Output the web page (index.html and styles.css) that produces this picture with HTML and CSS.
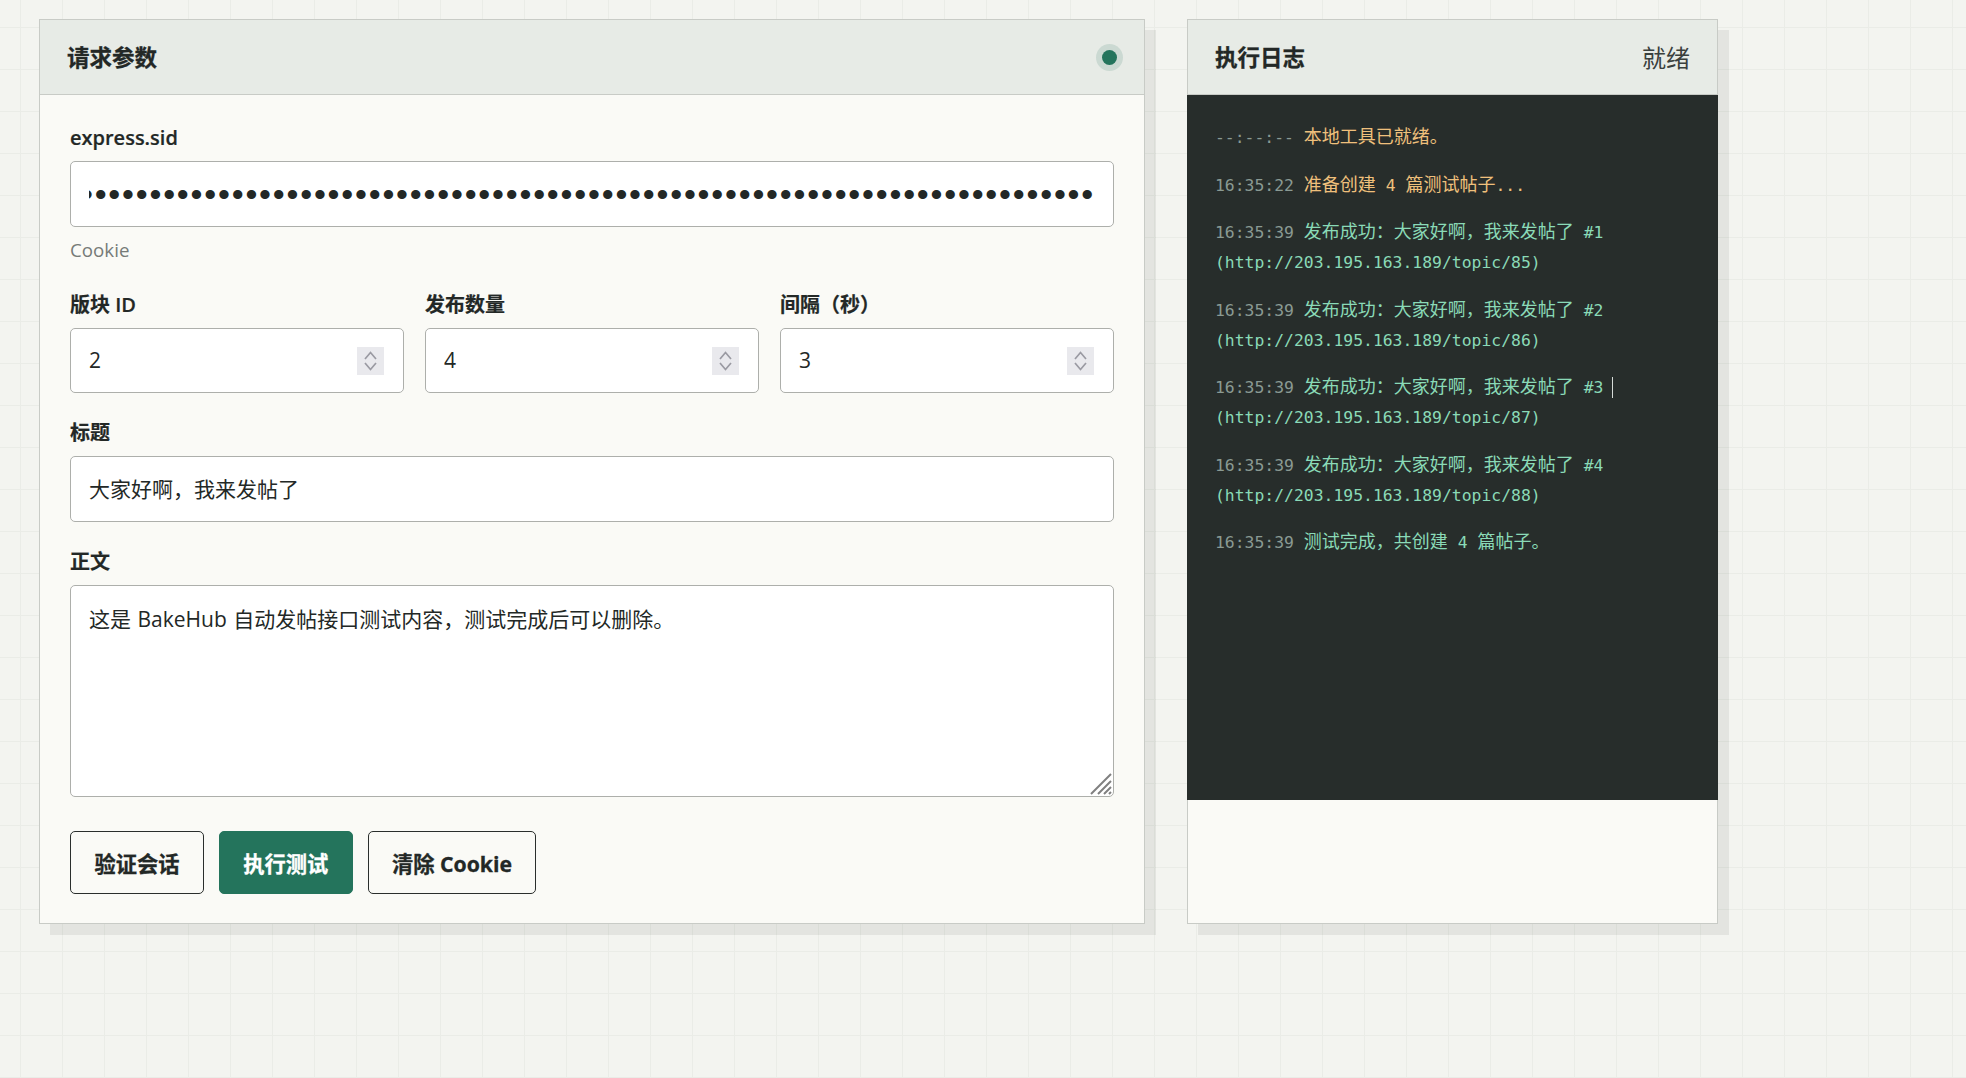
FILE: index.html
```html
<!DOCTYPE html>
<html lang="zh-CN">
<head>
  <meta charset="UTF-8">
  <meta name="viewport" content="width=device-width, initial-scale=1">
  <title>BakeHub 自动发帖测试</title>
  <link rel="stylesheet" href="styles.css">
</head>
<body>

<main class="layout">
  <section class="panel">
    <header class="panel-head">
      <h2>请求参数</h2>
      <span class="status-dot"></span>
    </header>
    <form class="form-body">
      <div class="form-group">
        <label for="sid">express.sid</label>
        <input class="field field-secret" type="password" id="sid" value="aaaaaaaaaaaaaaaaaaaaaaaaaaaaaaaaaaaaaaaaaaaaaaaaaaaaaaaaaaaaaaaaaaaaaaaaaaaaaaaaaaaaaaaaaaaaaaaaaaaaaaaaaaaaaaaaaaaaaaaaaaaa">
        <small class="hint">Cookie</small>
      </div>

      <div class="form-row">
        <div class="form-group">
          <label for="cid">版块 ID</label>
          <div class="number-wrap">
            <input class="field" type="number" id="cid" value="2">
            <svg class="spinner" viewBox="0 0 27 28" aria-hidden="true">
              <rect width="27" height="28"/>
              <path d="M8 12l5.5-6.5L19 12M8 16l5.5 6.5L19 16"/>
            </svg>
          </div>
        </div>
        <div class="form-group">
          <label for="count">发布数量</label>
          <div class="number-wrap">
            <input class="field" type="number" id="count" value="4">
            <svg class="spinner" viewBox="0 0 27 28" aria-hidden="true">
              <rect width="27" height="28"/>
              <path d="M8 12l5.5-6.5L19 12M8 16l5.5 6.5L19 16"/>
            </svg>
          </div>
        </div>
        <div class="form-group">
          <label for="delay">间隔（秒）</label>
          <div class="number-wrap">
            <input class="field" type="number" id="delay" value="3">
            <svg class="spinner" viewBox="0 0 27 28" aria-hidden="true">
              <rect width="27" height="28"/>
              <path d="M8 12l5.5-6.5L19 12M8 16l5.5 6.5L19 16"/>
            </svg>
          </div>
        </div>
      </div>

      <div class="form-group">
        <label for="title">标题</label>
        <input class="field field-title" type="text" id="title" value="大家好啊，我来发帖了">
      </div>

      <div class="form-group">
        <label for="content">正文</label>
        <div class="area-wrap">
          <textarea class="field field-area" id="content">这是 BakeHub 自动发帖接口测试内容，测试完成后可以删除。</textarea>
          <svg class="grip" viewBox="0 0 22 22" aria-hidden="true">
            <path d="M1 21L21 1M8 21L21 8M14 21l7-7M19 21l2-2"/>
          </svg>
        </div>
      </div>

      <div class="actions">
        <button type="button" class="btn">验证会话</button>
        <button type="button" class="btn btn-primary">执行测试</button>
        <button type="button" class="btn">清除 Cookie</button>
      </div>
    </form>
  </section>

  <section class="panel">
    <header class="panel-head">
      <h2>执行日志</h2>
      <span class="state">就绪</span>
    </header>
    <div class="log">
      <p class="log-line warn"><span class="time">--:--:--</span> <span class="zh">本地工具已就绪。</span></p>
      <p class="log-line warn"><span class="time">16:35:22</span> <span class="zh">准备创建</span> 4 <span class="zh">篇测试帖子</span>...</p>
      <p class="log-line ok"><span class="time">16:35:39</span> <span class="zh">发布成功：大家好啊，我来发帖了</span> #1<span class="url">(http://203.195.163.189/topic/85)</span></p>
      <p class="log-line ok"><span class="time">16:35:39</span> <span class="zh">发布成功：大家好啊，我来发帖了</span> #2<span class="url">(http://203.195.163.189/topic/86)</span></p>
      <p class="log-line ok"><span class="time">16:35:39</span> <span class="zh">发布成功：大家好啊，我来发帖了</span> #3<span class="caret"></span><span class="url">(http://203.195.163.189/topic/87)</span></p>
      <p class="log-line ok"><span class="time">16:35:39</span> <span class="zh">发布成功：大家好啊，我来发帖了</span> #4<span class="url">(http://203.195.163.189/topic/88)</span></p>
      <p class="log-line ok"><span class="time">16:35:39</span> <span class="zh">测试完成，共创建</span> 4 <span class="zh">篇帖子。</span></p>
    </div>
  </section>
</main>

</body>
</html>
```
FILE: styles.css
```css
* {
  box-sizing: border-box;
}

body {
  margin: 0;
  min-height: 100vh;
  font-family: 'Open Sans', 'Noto Sans CJK SC', sans-serif;
  color: #232826;
  background-color: #f3f4f0;
  background-image:
    linear-gradient(#eaece7 1px, transparent 1px),
    linear-gradient(90deg, #eaece7 1px, transparent 1px);
  background-size: 42px 42px;
  background-position: 20px 27px;
}

.layout {
  display: grid;
  grid-template-columns: 1106px 531px;
  column-gap: 42px;
  align-items: stretch;
  padding: 19px 0 0 39px;
}

.panel {
  background: #fafaf6;
  border: 1px solid #c8cbc6;
  box-shadow: 11px 11px 0 rgba(40, 50, 40, 0.08);
  height: 905px;
}

.panel-head {
  height: 75px;
  display: flex;
  align-items: center;
  justify-content: space-between;
  padding: 0 27px;
  background: #e7ebe6;
  border-bottom: 1px solid #c8cbc6;
}

.panel-head h2 {
  margin: -1px 0 0;
  font-size: 22.5px;
  font-weight: 700;
  -webkit-text-stroke: 0.3px;
}

.status-dot {
  width: 15px;
  height: 15px;
  border-radius: 50%;
  background: #24745c;
  box-shadow: 0 0 0 6px rgba(36, 116, 92, 0.14);
}

.state {
  margin-top: -1px;
  font-size: 24px;
  color: #3a403d;
}

.form-body {
  padding: 29px 30px 0;
}

.form-group {
  margin-bottom: 26px;
}

.form-group label {
  display: block;
  height: 28px;
  line-height: 28px;
  margin-bottom: 9px;
  font-size: 20px;
  font-weight: 600;
  -webkit-text-stroke: 0.2px;
}

.field {
  display: block;
  width: 100%;
  height: 65.6px;
  padding: 0 18px;
  font-family: inherit;
  font-size: 21px;
  color: #232826;
  background: #fff;
  border: 1px solid #adafab;
  border-radius: 5px;
  outline: none;
}

.field-secret {
  direction: rtl;
  padding-top: 2px;
  font-family: 'Liberation Sans', sans-serif;
  font-size: 34px;
  letter-spacing: 1.8px;
}

.field-title {
  padding-bottom: 2px;
}

.hint {
  display: block;
  margin-top: 8px;
  height: 30px;
  line-height: 30px;
  font-size: 18.75px;
  color: #767b78;
}

.form-row {
  display: grid;
  grid-template-columns: repeat(3, 1fr);
  column-gap: 21px;
}

.number-wrap,
.area-wrap {
  position: relative;
}

.field[type=number] {
  appearance: textfield;
}

.field[type=number]::-webkit-inner-spin-button {
  display: none;
}

.spinner {
  position: absolute;
  top: 19px;
  right: 20px;
  width: 27px;
  height: 28px;
}

.spinner rect {
  fill: #e9e9ed;
}

.spinner path {
  fill: none;
  stroke: #9a9aa2;
  stroke-width: 1.7;
}

.field-area {
  height: 212px;
  padding: 18px 18px;
  line-height: 1.5;
  word-spacing: 1px;
  resize: none;
}

.grip {
  position: absolute;
  right: 2px;
  bottom: 2px;
  width: 22px;
  height: 22px;
}

.grip path {
  fill: none;
  stroke: #808080;
  stroke-width: 2;
}

.actions {
  display: flex;
  gap: 15px;
  margin-top: 34px;
}

.btn {
  height: 63px;
  padding: 0 23.4px;
  font-family: inherit;
  font-size: 21.25px;
  font-weight: 700;
  color: #232826;
  background: #fafaf6;
  border: 1.25px solid #2a2e2c;
  border-radius: 5px;
  cursor: pointer;
  -webkit-text-stroke: 0.3px;
}

.btn-primary {
  color: #fff;
  background: #24745c;
  border-color: #24745c;
}

.log {
  height: 705px;
  padding: 28px 27px 0 28px;
  margin: 0 -1px;
  background: #272d2b;
  font-family: 'DejaVu Sans Mono', monospace;
  font-size: 16.4px;
  line-height: 30px;
}

.log-line {
  margin: 0 0 17.5px;
}

.url {
  display: block;
}

.zh {
  font-family: 'Noto Sans CJK SC', sans-serif;
  font-size: 18px;
  line-height: 1;
}

.time {
  color: #8a9a93;
}

.warn {
  color: #efc07c;
}

.ok {
  color: #8adab7;
}

.caret {
  position: relative;
}

.caret::after {
  content: "";
  position: absolute;
  left: 9px;
  top: -1px;
  width: 1px;
  height: 21px;
  background: #d6dbd8;
}
```
